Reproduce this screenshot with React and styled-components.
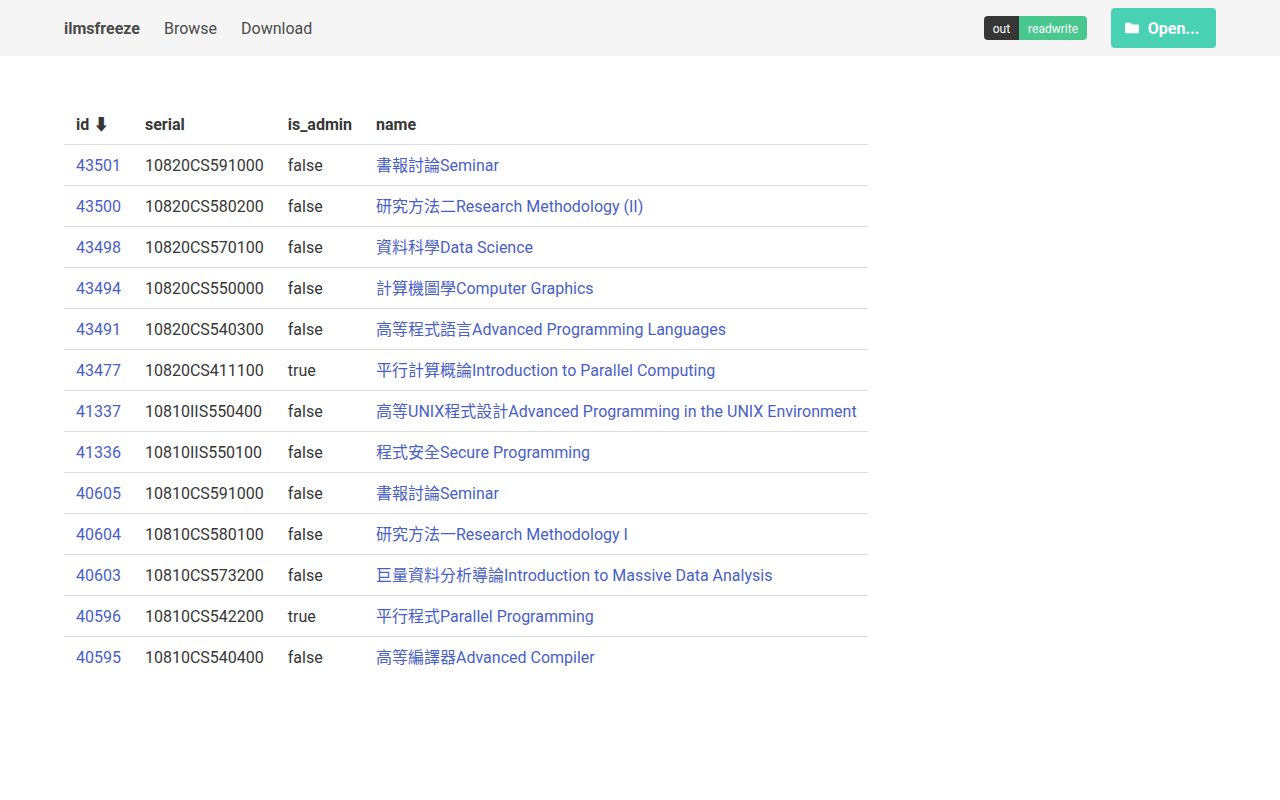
import React from "react";
import styled, { createGlobalStyle } from "styled-components";

const Global = createGlobalStyle`
  html, body { margin: 0; padding: 0; background: #fff; }
  html { text-rendering: optimizeLegibility; -webkit-font-smoothing: antialiased; }
  body {
    font-family: Roboto, "Noto Sans CJK TC", sans-serif;
    font-size: 16px;
    line-height: 1.5;
    font-weight: 400;
    color: #4a4a4a;
  }
`;

const Navbar = styled.nav`
  display: flex;
  align-items: stretch;
  justify-content: space-between;
  height: 56px;
  padding: 0 64px;
  background: #f5f5f5;
`;
const NavStart = styled.div`
  display: flex;
  align-items: center;
  gap: 24px;
`;
const NavEnd = styled.div`
  display: flex;
  align-items: center;
  gap: 24px;
`;
const NavItem = styled.a`
  padding-top: 2px;
  color: #4a4a4a;
  font-weight: ${(p) => (p.$brand ? 700 : 400)};
  text-decoration: none;
`;
const Tags = styled.div`
  display: flex;
  font-size: 12px;
  line-height: 18px;
`;
const Tag = styled.span`
  display: flex;
  align-items: center;
  box-sizing: border-box;
  height: 24px;
  padding: 2px 9px 0;
  color: #fff;
  background: ${(p) => p.$bg};
  border-radius: ${(p) => p.$radius};
`;
const OpenButton = styled.button`
  display: flex;
  align-items: center;
  justify-content: center;
  gap: 8px;
  height: 40px;
  width: 105px;
  padding: 0 3px 0 0;
  border: 0;
  border-radius: 4px;
  background: #48d1b2;
  color: #fff;
  font: inherit;
  font-weight: 700;
`;
const OpenLabel = styled.span`
  padding-top: 2px;
`;
const FolderIcon = styled.svg`
  width: 14px;
  height: 14px;
  fill: #fff;
  margin-right: 1px;
`;
const Main = styled.main`
  padding: 48px 64px;
`;
const Table = styled.table`
  border-collapse: collapse;
  border-spacing: 0;
  color: #363636;
`;
const Th = styled.th`
  padding: 9px 12px 7px;
  text-align: left;
  font-weight: 700;
  color: #363636;
  border-bottom: 1px solid #dbdbdb;
  white-space: nowrap;
  &:last-child { padding-right: 11.4px; }
`;
const Td = styled.td`
  padding: 9px 12px 7px;
  border-bottom: 1px solid #dbdbdb;
  white-space: nowrap;
  tr:last-child > & { border-bottom: 0; }
  &:last-child { padding-right: 11.4px; }
`;
const Link = styled.a`
  color: #485fc7;
  text-decoration: none;
`;

const rows = [
  ["43501", "10820CS591000", "false", "書報討論Seminar"],
  ["43500", "10820CS580200", "false", "研究方法二Research Methodology (II)"],
  ["43498", "10820CS570100", "false", "資料科學Data Science"],
  ["43494", "10820CS550000", "false", "計算機圖學Computer Graphics"],
  ["43491", "10820CS540300", "false", "高等程式語言Advanced Programming Languages"],
  ["43477", "10820CS411100", "true", "平行計算概論Introduction to Parallel Computing"],
  ["41337", "10810IIS550400", "false", "高等UNIX程式設計Advanced Programming in the UNIX Environment"],
  ["41336", "10810IIS550100", "false", "程式安全Secure Programming"],
  ["40605", "10810CS591000", "false", "書報討論Seminar"],
  ["40604", "10810CS580100", "false", "研究方法一Research Methodology I"],
  ["40603", "10810CS573200", "false", "巨量資料分析導論Introduction to Massive Data Analysis"],
  ["40596", "10810CS542200", "true", "平行程式Parallel Programming"],
  ["40595", "10810CS540400", "false", "高等編譯器Advanced Compiler"],
];

export default function App() {
  return (
    <>
      <Global />
      <Navbar>
        <NavStart>
          <NavItem $brand href="#">ilmsfreeze</NavItem>
          <NavItem href="#">Browse</NavItem>
          <NavItem href="#">Download</NavItem>
        </NavStart>
        <NavEnd>
          <Tags>
            <Tag $bg="#363636" $radius="4px 0 0 4px">out</Tag>
            <Tag $bg="#48c78e" $radius="0 4px 4px 0">readwrite</Tag>
          </Tags>
          <OpenButton>
            <FolderIcon viewBox="0 0 512 512">
              <path d="M464 128H272l-64-64H48C21.49 64 0 85.49 0 112v288c0 26.51 21.49 48 48 48h416c26.51 0 48-21.49 48-48V176c0-26.51-21.49-48-48-48z" />
            </FolderIcon>
            <OpenLabel>Open...</OpenLabel>
          </OpenButton>
        </NavEnd>
      </Navbar>
      <Main>
        <Table>
          <thead>
            <tr>
              <Th>id ⬇</Th>
              <Th>serial</Th>
              <Th>is_admin</Th>
              <Th>name</Th>
            </tr>
          </thead>
          <tbody>
            {rows.map(([id, serial, admin, name]) => (
              <tr key={id}>
                <Td><Link href="#">{id}</Link></Td>
                <Td>{serial}</Td>
                <Td>{admin}</Td>
                <Td><Link href="#">{name}</Link></Td>
              </tr>
            ))}
          </tbody>
        </Table>
      </Main>
    </>
  );
}
